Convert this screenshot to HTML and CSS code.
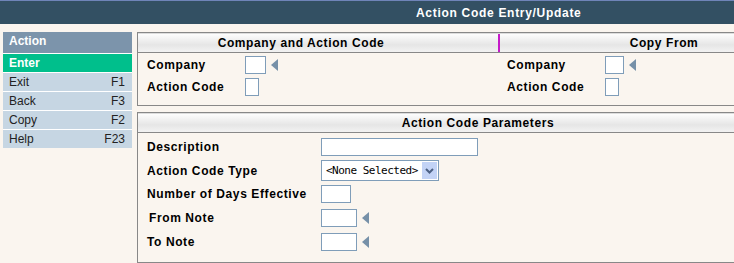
FILE: index.html
```html
<!DOCTYPE html>
<html lang="en">
  <head>
    <meta charset="utf-8">
    <title>Action Code Entry/Update</title>
    <link rel="stylesheet" href="styles.css">
  </head>
  <body>
    <div class="topbar"><span class="title">Action Code Entry/Update</span></div>
    <div class="page">
      <div class="menu">
        <div class="menu-head">Action</div>
        <div class="menu-item active">Enter</div>
        <div class="menu-item"><span>Exit</span><span>F1</span></div>
        <div class="menu-item"><span>Back</span><span>F3</span></div>
        <div class="menu-item"><span>Copy</span><span>F2</span></div>
        <div class="menu-item"><span>Help</span><span>F23</span></div>
      </div>
      <div class="main">
        <div class="panel">
          <div class="panel-head split">
            <div class="head-cell first">Company and Action Code</div>
            <div class="head-cell copy">Copy From</div>
          </div>
          <div class="panel-body cols">
            <div class="col left">
              <div class="row"><label class="lbl w98">Company</label><input class="box w20"><span class="prompt"></span></div>
              <div class="row"><label class="lbl w98">Action Code</label><input class="box w13"></div>
            </div>
            <div class="col right">
              <div class="row"><label class="lbl w98">Company</label><input class="box w18"><span class="prompt"></span></div>
              <div class="row"><label class="lbl w98">Action Code</label><input class="box w13"></div>
            </div>
          </div>
        </div>
        <div class="panel second">
          <div class="panel-head"><div class="head-cell params-title">Action Code Parameters</div></div>
          <div class="panel-body params">
            <div class="row"><label class="lbl w174">Description</label><input class="box w156"></div>
            <div class="row"><label class="lbl w174">Action Code Type</label>
              <div class="select"><span class="select-text">&lt;None Selected&gt;</span><span class="select-btn"><svg width="9" height="6" viewBox="0 0 9 6"><path d="M1 1 L4.5 4.5 L8 1" fill="none" stroke="#4d6185" stroke-width="2"/></svg></span></div>
            </div>
            <div class="row"><label class="lbl w174">Number of Days Effective</label><input class="box w29"></div>
            <div class="row"><label class="lbl w174 indent">From Note</label><input class="box w35"><span class="prompt"></span></div>
            <div class="row"><label class="lbl w174">To Note</label><input class="box w35"><span class="prompt"></span></div>
          </div>
        </div>
      </div>
    </div>
  </body>
</html>
```
FILE: styles.css
```css
body{
  margin:0;
  background-color:#faf5ef;
  font-family:"Liberation Sans", Arial, sans-serif;
  font-size:12px;
  color:#000;
  overflow:hidden;
}
.topbar{
  height:23px;
  background-color:#335063;
  border-top:1px solid #6f84b8;
  display:flex;
  align-items:center;
  padding-left:416px;
}
.title{
  color:#fff;
  font-weight:bold;
  font-size:12px;
  letter-spacing:0.7px;
}
.page{
  display:flex;
  gap:5px;
  padding:8px 0 0 3px;
}
.menu{
  width:129px;
  flex:none;
}
.menu-head{
  background-color:#7c94ab;
  color:#fff;
  font-weight:bold;
  height:21px;
  line-height:19px;
  padding-left:6px;
  border-bottom:1px solid #fff;
}
.menu-item{
  background-color:#c6d6e3;
  height:18px;
  line-height:19px;
  padding:0 7px 0 6px;
  border-bottom:1px solid #fff;
  display:flex;
  justify-content:space-between;
  color:#222;
}
.menu-item:last-child{
  border-bottom:none;
}
.menu-item.active{
  background-color:#00bf8c;
  color:#fff;
  font-weight:bold;
}
.main{
  flex:1;
  margin-right:-3px;
}
.panel{
  border:1px solid #888;
}
.panel.second{
  margin-top:6px;
}
.panel-head{
  height:18px;
  display:flex;
  border-bottom:1px solid #888;
  border-top:1px solid #ddd;
  background:linear-gradient(#fdfdfd, #e6e6e6 60%, #f2f2f2);
}
.head-cell{
  flex:1;
  text-align:center;
  font-weight:bold;
  line-height:18px;
  letter-spacing:0.6px;
}
.split .head-cell.first{
  flex:none;
  box-sizing:border-box;
  width:362px;
  padding-right:34px;
  border-right:2px solid #c51ac8;
}
.head-cell.copy{
  padding-left:92px;
}
.head-cell.params-title{
  padding-left:82px;
}
.panel-body.cols{
  display:flex;
  height:51px;
  padding-top:1px;
}
.col.left{
  width:352px;
  padding-left:9px;
}
.col.right{
  padding-left:8px;
}
.row{
  display:flex;
  align-items:center;
  height:22px;
}
.lbl{
  font-weight:bold;
  letter-spacing:0.6px;
  flex:none;
}
.lbl.indent{
  text-indent:2px;
}
.w98{width:98px;}
.w174{width:174px;}
.box{
  box-sizing:border-box;
  height:18px;
  border:1px solid #7f9db9;
  background:#fff;
  margin:0;
  padding:0;
}
.w13{width:14px;}
.w18{width:19px;}
.w20{width:21px;}
.w29{width:30px;}
.w35{width:36px;}
.w156{width:157px;}
.prompt{
  width:0;
  height:0;
  margin-left:5px;
  border-top:6px solid transparent;
  border-bottom:6px solid transparent;
  border-right:7px solid #7690a8;
}
.params{
  height:129px;
  padding-top:2px;
  padding-left:9px;
  box-sizing:border-box;
}
.params .row{
  height:23.7px;
}
.select{
  box-sizing:border-box;
  width:118px;
  height:21px;
  border:1px solid #7f9db9;
  background:#fff;
  display:flex;
  align-items:center;
  justify-content:space-between;
  padding:1px;
}
.select-text{
  font-family:"DejaVu Sans Mono", monospace;
  font-size:11px;
  letter-spacing:-0.5px;
  padding-left:3px;
}
.select-btn{
  width:15px;
  height:17px;
  background:#c3d3f6;
  display:flex;
  align-items:center;
  justify-content:center;
}
```
